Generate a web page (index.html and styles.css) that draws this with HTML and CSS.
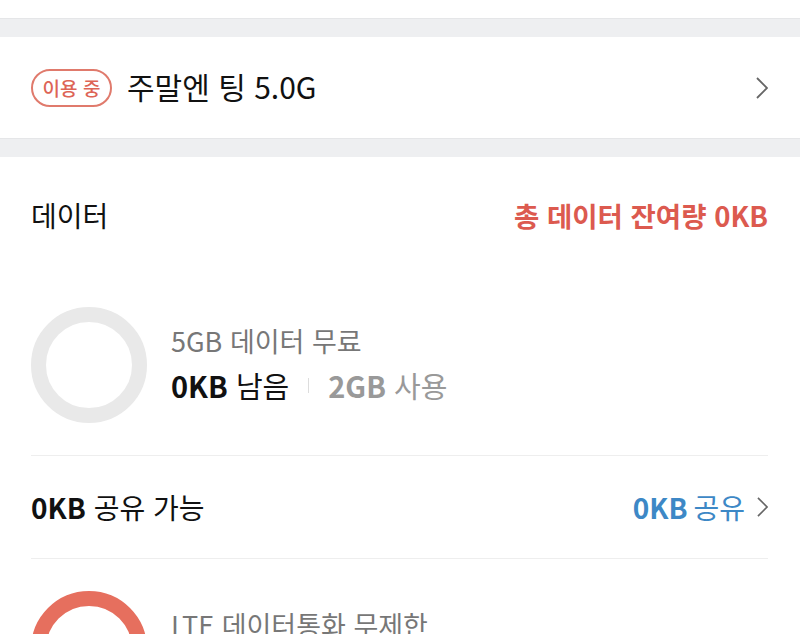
FILE: index.html
```html
<!DOCTYPE html>
<html lang="ko">
<head>
    <meta charset="UTF-8">
    <meta name="viewport" content="width=device-width, initial-scale=1.0">
    <title>요금제</title>
    <link rel="stylesheet" href="styles.css">
</head>
<body>

<div class="top-space"></div>
<div class="gap"></div>

<div class="plan">
    <span class="badge">이용 중</span>
    <span class="plan-name">주말엔 팅 5.0G</span>
    <svg class="chevron" viewBox="0 0 12 22" width="12" height="22">
        <polyline points="1,1 11,11 1,21" fill="none" stroke="#666" stroke-width="1.8"/>
    </svg>
</div>

<div class="gap"></div>

<div class="data">
    <div class="data-head">
        <span class="data-title">데이터</span>
        <span class="data-total">총 데이터 잔여량 0KB</span>
    </div>

    <div class="usage">
        <div class="ring"></div>
        <div class="usage-info">
            <div class="usage-name">5GB 데이터 무료</div>
            <div class="usage-amount">
                <span class="left"><b>0KB</b> 남음</span>
                <span class="sep"></span>
                <span class="used"><b>2GB</b> 사용</span>
            </div>
        </div>
    </div>

    <div class="share">
        <span class="share-label"><b>0KB</b> 공유 가능</span>
        <span class="share-link"><b>0KB</b> 공유
            <svg class="chevron small" viewBox="0 0 12 22" width="11" height="20">
                <polyline points="1,1 11,11 1,21" fill="none" stroke="#666" stroke-width="1.8"/>
            </svg>
        </span>
    </div>

    <div class="usage">
        <div class="ring full"></div>
        <div class="usage-info">
            <div class="usage-name">LTE 데이터통화 무제한</div>
            <div class="usage-amount">
                <span class="left"><b>무제한</b></span>
            </div>
        </div>
    </div>
</div>

</body>
</html>
```

FILE: styles.css
```css
body {
    margin: 0;
    background: #fff;
    font-family: 'Noto Sans CJK KR', 'Noto Sans', sans-serif;
    color: #111;
}
.top-space {
    height: 18px;
}
.gap {
    height: 18px;
    background: #eeeff1;
    border-top: 1px solid #e5e6e8;
}
.plan {
    display: flex;
    align-items: center;
    height: 101px;
    padding: 0 32px 0 31px;
}
.badge {
    display: inline-flex;
    align-items: center;
    justify-content: center;
    box-sizing: border-box;
    width: 81px;
    height: 38px;
    border: 2px solid #e07a6c;
    border-radius: 19px;
    color: #dd6456;
    font-size: 19px;
    font-weight: 500;
}
.plan-name {
    margin-left: 15px;
    margin-top: -3px;
    font-size: 30px;
    flex: 1;
}
.chevron {
    display: block;
}
.data {
    padding: 0 32px 0 31px;
}
.data-head {
    display: flex;
    justify-content: space-between;
    align-items: center;
    height: 116px;
    padding-bottom: 2px;
}
.data-title {
    font-size: 28px;
}
.data-total {
    font-size: 27.5px;
    font-weight: 700;
    color: #dc5a4f;
}
.usage {
    display: flex;
    align-items: center;
    padding: 32px 0;
    border-bottom: 1px solid #eeeeee;
}
.ring {
    width: 116px;
    height: 116px;
    box-sizing: border-box;
    border: 15px solid #e9e9e9;
    border-radius: 50%;
}
.ring.full {
    border-color: #e66f5e;
}
.usage-info {
    margin-left: 24px;
    margin-top: -4px;
}
.usage-name {
    font-size: 27px;
    color: #777;
    line-height: 44px;
}
.usage-amount {
    display: flex;
    align-items: center;
    font-size: 29px;
    line-height: 44px;
}
.usage-amount b {
    font-weight: 700;
}
.sep {
    width: 1px;
    height: 15px;
    background: #ddd;
    margin: 0 19px;
}
.used {
    color: #999;
}
.share {
    display: flex;
    justify-content: space-between;
    align-items: center;
    height: 102px;
    border-bottom: 1px solid #eeeeee;
    font-size: 28px;
}
.share-link {
    display: flex;
    align-items: center;
    gap: 8px;
    color: #3d88c6;
}
.share-link b {
    margin-right: -2px;
}
.chevron.small {
    margin-left: 4px;
}
```
